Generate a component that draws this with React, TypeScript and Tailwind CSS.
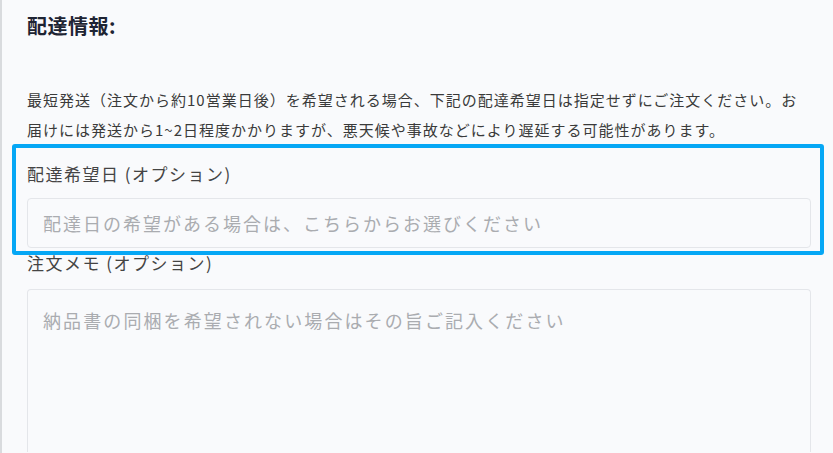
import React from "react";

const font = "font-['Noto_Sans_CJK_JP','Noto_Sans',sans-serif]";

const DeliveryInfo = () => {
  return (
    <div className={`min-h-screen w-full bg-[#f9fafc] border-l-2 border-[#d9dbde] ${font}`}>
      <div className="pl-[25px] pr-[22px] pt-[12px]">
        {/* 見出し */}
        <h2 className="text-[20px] leading-[28px] font-bold tracking-[0.5px] text-[#1e2433]">配達情報:</h2>

        <p className="mt-[45px] text-[15px] leading-[30px] tracking-[1px] text-[#3a3a3a]">
          最短発送（注文から約10営業日後）を希望される場合、下記の配達希望日は指定せずにご注文ください。お届けには発送から1~2日程度かかりますが、悪天候や事故などにより遅延する可能性があります。
        </p>

        {/* 配達希望日 */}
        <div className="relative mt-[17px]">
          <label className="block text-[17px] leading-[24px] tracking-[1.5px] text-[#444]">
            配達希望日 (オプション)
          </label>
          <input
            type="text"
            placeholder="配達日の希望がある場合は、こちらからお選びください"
            className="mt-[12px] block w-full h-[50px] rounded-[4px] border border-[#e4e6ea] bg-[#f9fafc] px-[15px] text-[18px] tracking-[2px] text-[#333] placeholder:text-[#aaacb0] outline-none"
          />
          {/* ハイライト枠 */}
          <div className="pointer-events-none absolute left-[-15px] right-[-13px] top-[-18px] bottom-[-7px] rounded-[3px] border-4 border-[#06a7f5]" />
        </div>

        {/* 注文メモ */}
        <label className="mt-[3px] block text-[17px] leading-[24px] tracking-[1.5px] text-[#444]">
          注文メモ (オプション)
        </label>
        <textarea
          placeholder="納品書の同梱を希望されない場合はその旨ご記入ください"
          className="mt-[14px] block w-full h-[163px] resize-none rounded-t-[4px] border border-b-0 border-[#e4e6ea] bg-[#f9fafc] px-[15px] pt-[16px] text-[18px] leading-[28px] tracking-[2.1px] text-[#333] placeholder:text-[#aaacb0] outline-none"
        />
      </div>
    </div>
  );
};

export default function App() {
  return <DeliveryInfo />;
}
